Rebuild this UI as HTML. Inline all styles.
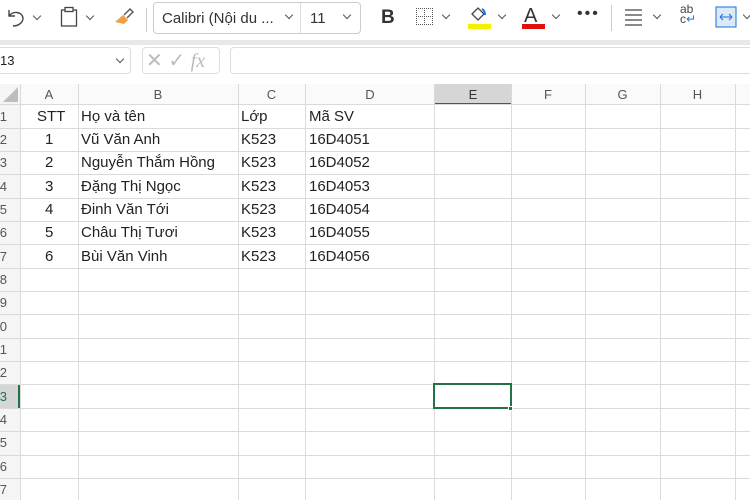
<!DOCTYPE html>
<html><head><meta charset="utf-8"><style>
*{margin:0;padding:0;box-sizing:border-box}
body{width:750px;height:500px;overflow:hidden;background:#fff;font-family:"Liberation Sans","DejaVu Sans",sans-serif;position:relative;color:#222}
.a{position:absolute}
.t{position:absolute;font-size:15px;white-space:nowrap}
.hl{position:absolute;height:1px;background:#dadada;left:0;width:750px}
.vl{position:absolute;width:1px;background:#dadada;top:84px;height:416px}
.ch{position:absolute;top:84px;height:20px;font-size:13px;color:#555;text-align:center;line-height:22px}
.rn{position:absolute;left:-20px;width:27px;text-align:right;font-size:13px;color:#555}
.chev{position:absolute;width:6px;height:6px;border-right:1.3px solid #555;border-bottom:1.3px solid #555;transform:rotate(45deg)}
</style></head><body>
<svg class="a" style="left:5px;top:7px" width="22" height="22" viewBox="0 0 22 22"><path d="M4 3v6h6M4 9c3-5 13-5 14 2 0 5-5 8-10 8" fill="none" stroke="#444" stroke-width="1.4"/></svg>
<div class="chev" style="left:34px;top:13px"></div>
<svg class="a" style="left:60px;top:6px" width="18" height="22"><rect x="1.5" y="4" width="15" height="16" fill="none" stroke="#444" stroke-width="1.3"/><rect x="5" y="1.5" width="8" height="4" fill="#fff" stroke="#444" stroke-width="1.3"/></svg>
<div class="chev" style="left:87px;top:13px"></div>
<svg class="a" style="left:112px;top:6px" width="24" height="22"><path d="M3 16l8-7 5 5-4 4z" fill="#f0a040"/><path d="M12 9l6-6 3 3-6 6" fill="none" stroke="#555" stroke-width="1.4"/></svg>
<div class="a" style="left:146px;top:8px;width:1px;height:24px;background:#ccc"></div>
<div class="a" style="left:153px;top:2px;width:208px;height:32px;border:1px solid #ccc;border-radius:4px"></div>
<div class="a" style="left:300px;top:3px;width:1px;height:30px;background:#ddd"></div>
<div class="t" style="left:162px;top:10px;font-size:15px;color:#333">Calibri (Nội du ...</div>
<div class="chev" style="left:286px;top:12px"></div>
<div class="t" style="left:310px;top:10px;font-size:15px;color:#333">11</div>
<div class="chev" style="left:344px;top:12px"></div>
<div class="t" style="left:381px;top:7px;font-size:19px;font-weight:bold;color:#333">B</div>
<div class="a" style="left:416px;top:8px;width:17px;height:17px;border:1px dotted #555"></div>
<div class="a" style="left:424px;top:8px;width:1px;height:17px;border-left:1px dotted #555"></div>
<div class="a" style="left:416px;top:16px;width:17px;height:1px;border-top:1px dotted #555"></div>
<div class="chev" style="left:443px;top:12px"></div>
<svg class="a" style="left:468px;top:4px" width="20" height="20"><path d="M4 10l6-6 6 6-6 6z" fill="none" stroke="#444" stroke-width="1.3"/><path d="M14 5c2 1 3 3 3 6" stroke="#1e6fd9" stroke-width="2" fill="none"/></svg>
<div class="a" style="left:468px;top:24px;width:23px;height:5px;background:#f5ef00"></div>
<div class="chev" style="left:499px;top:12px"></div>
<div class="t" style="left:524px;top:5px;font-size:20px;color:#333">A</div>
<div class="a" style="left:522px;top:24px;width:23px;height:5px;background:#e01010"></div>
<div class="chev" style="left:553px;top:12px"></div>
<div class="t" style="left:577px;top:5px;font-size:16px;letter-spacing:2px;color:#333">•••</div>
<div class="a" style="left:611px;top:5px;width:1px;height:26px;background:#ccc"></div>
<svg class="a" style="left:624px;top:7px" width="20" height="20"><path d="M1 3h17M1 8h17M1 13h17M1 18h17" stroke="#444" stroke-width="1.2"/></svg>
<div class="chev" style="left:654px;top:12px"></div>
<div class="t" style="left:680px;top:4px;font-size:12px;line-height:10px;color:#444">ab<br>c<span style="color:#1e6fd9">↵</span></div>
<svg class="a" style="left:715px;top:6px" width="22" height="22"><rect x="1" y="1" width="20" height="20" fill="#dbe9f8" stroke="#1e6fd9"/><path d="M5 11h12M5 11l3-3M5 11l3 3M17 11l-3-3M17 11l-3 3" stroke="#1e6fd9" fill="none"/></svg>
<div class="chev" style="left:744px;top:12px"></div>
<div class="a" style="left:0;top:40px;width:750px;height:5px;background:#e8e8e8"></div>
<div class="a" style="left:-5px;top:47px;width:136px;height:27px;border:1px solid #ddd;border-radius:4px"></div>
<div class="t" style="left:0;top:53px;font-size:13px">13</div>
<div class="chev" style="left:117px;top:56px"></div>
<div class="a" style="left:142px;top:47px;width:78px;height:27px;border:1px solid #ddd;border-radius:4px"></div>
<div class="t" style="left:146px;top:48px;font-size:20px;color:#bbb">✕ ✓ <i style="font-family:'Liberation Serif',serif">fx</i></div>
<div class="a" style="left:230px;top:47px;width:530px;height:27px;border:1px solid #ddd;border-radius:4px"></div>
<div class="a" style="left:0;top:84px;width:750px;height:21px;background:#fafafa"></div>
<div class="a" style="left:0;top:84px;width:20px;height:416px;background:#f5f5f5"></div>
<svg class="a" style="left:2px;top:86px" width="17" height="17"><path d="M16 1V16H1z" fill="#bdbdbd"/></svg>
<div class="a" style="left:435px;top:84px;width:76px;height:21px;background:#d6d6d6;border-bottom:2px solid #217346"></div>
<div class="a" style="left:0;top:384px;width:20px;height:24px;background:#d6d6d6;border-right:2px solid #217346"></div>
<div class="hl" style="top:104px"></div>
<div class="hl" style="top:128px"></div><div class="hl" style="top:151px"></div><div class="hl" style="top:174px"></div><div class="hl" style="top:198px"></div><div class="hl" style="top:221px"></div><div class="hl" style="top:244px"></div><div class="hl" style="top:268px"></div><div class="hl" style="top:291px"></div><div class="hl" style="top:314px"></div><div class="hl" style="top:338px"></div><div class="hl" style="top:361px"></div><div class="hl" style="top:384px"></div><div class="hl" style="top:408px"></div><div class="hl" style="top:431px"></div><div class="hl" style="top:455px"></div><div class="hl" style="top:478px"></div>
<div class="vl" style="left:20px"></div><div class="vl" style="left:78px"></div><div class="vl" style="left:238px"></div><div class="vl" style="left:305px"></div><div class="vl" style="left:434px"></div><div class="vl" style="left:511px"></div><div class="vl" style="left:585px"></div><div class="vl" style="left:660px"></div><div class="vl" style="left:735px"></div>
<div class="ch" style="left:20px;width:58px">A</div><div class="ch" style="left:78px;width:160px">B</div><div class="ch" style="left:238px;width:67px">C</div><div class="ch" style="left:305px;width:130px">D</div><div class="ch" style="left:435px;width:76px;color:#333">E</div><div class="ch" style="left:511px;width:74px">F</div><div class="ch" style="left:585px;width:75px">G</div><div class="ch" style="left:660px;width:75px">H</div>
<div class="rn" style="top:109px">1</div><div class="rn" style="top:132px">2</div><div class="rn" style="top:155px">3</div><div class="rn" style="top:179px">4</div><div class="rn" style="top:202px">5</div><div class="rn" style="top:225px">6</div><div class="rn" style="top:249px">7</div><div class="rn" style="top:272px">8</div><div class="rn" style="top:295px">9</div><div class="rn" style="top:319px">10</div><div class="rn" style="top:342px">11</div><div class="rn" style="top:365px">12</div><div class="rn" style="top:389px;color:#217346">13</div><div class="rn" style="top:412px">14</div><div class="rn" style="top:435px">15</div><div class="rn" style="top:459px">16</div><div class="rn" style="top:482px">17</div>
<div class="t" style="left:37px;top:108px">STT</div><div class="t" style="left:81px;top:108px">Họ và tên</div><div class="t" style="left:241px;top:108px">Lớp</div><div class="t" style="left:309px;top:108px">Mã SV</div>
<div class="t" style="left:45px;top:131px">1</div><div class="t" style="left:81px;top:131px">Vũ Văn Anh</div><div class="t" style="left:241px;top:131px">K523</div><div class="t" style="left:309px;top:131px">16D4051</div>
<div class="t" style="left:45px;top:154px">2</div><div class="t" style="left:81px;top:154px">Nguyễn Thắm Hồng</div><div class="t" style="left:241px;top:154px">K523</div><div class="t" style="left:309px;top:154px">16D4052</div>
<div class="t" style="left:45px;top:178px">3</div><div class="t" style="left:81px;top:178px">Đặng Thị Ngọc</div><div class="t" style="left:241px;top:178px">K523</div><div class="t" style="left:309px;top:178px">16D4053</div>
<div class="t" style="left:45px;top:201px">4</div><div class="t" style="left:81px;top:201px">Đinh Văn Tới</div><div class="t" style="left:241px;top:201px">K523</div><div class="t" style="left:309px;top:201px">16D4054</div>
<div class="t" style="left:45px;top:224px">5</div><div class="t" style="left:81px;top:224px">Châu Thị Tươi</div><div class="t" style="left:241px;top:224px">K523</div><div class="t" style="left:309px;top:224px">16D4055</div>
<div class="t" style="left:45px;top:248px">6</div><div class="t" style="left:81px;top:248px">Bùi Văn Vinh</div><div class="t" style="left:241px;top:248px">K523</div><div class="t" style="left:309px;top:248px">16D4056</div>
<div class="a" style="left:433px;top:383px;width:79px;height:26px;border:2px solid #217346"></div>
<div class="a" style="left:508px;top:406px;width:5px;height:5px;background:#217346;border:1px solid #fff"></div>
</body></html>
